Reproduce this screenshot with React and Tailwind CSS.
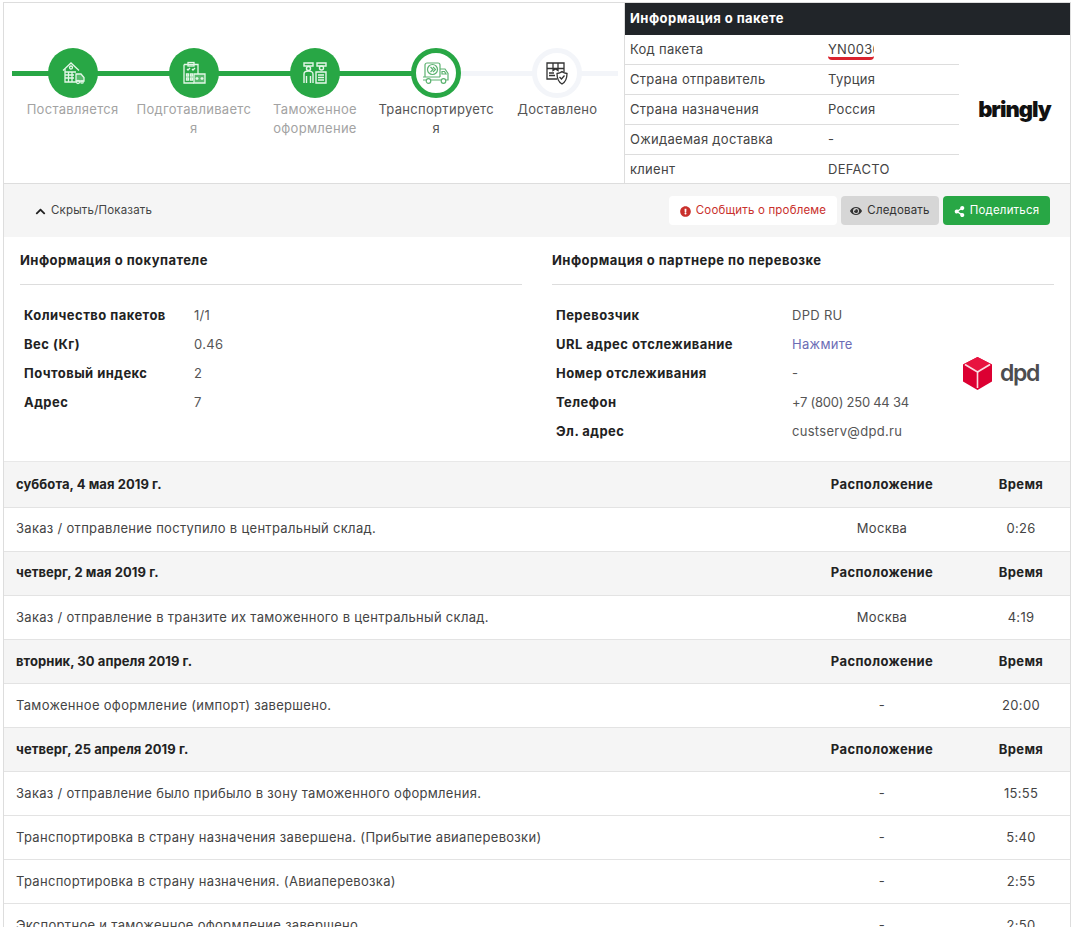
import React from 'react'
import { FaChevronUp, FaExclamationCircle, FaEye, FaShareAlt } from 'react-icons/fa'

// stepper icons, drawn by hand
const WarehouseIcon = () => (
  <svg width="24" height="24" viewBox="0 0 24 24" fill="none" stroke="currentColor" strokeWidth="1.3">
    <path d="M2 9.500 10 2l8 7.500" />
    <path d="M4 8v13h11" />
    <circle cx="10" cy="6.500" r="1.500" />
    <path d="M4 11h11M4 14h9M4 17h9M7.500 11v10M11 11v10" />
    <path d="M15 13h5l3 3.500V20h-8z" fill="currentColor" fillOpacity="0.25" />
    <circle cx="17" cy="21" r="1.500" />
    <circle cx="21" cy="21" r="1.200" />
  </svg>
)

const PlanIcon = () => (
  <svg width="24" height="24" viewBox="0 0 24 24" fill="none" stroke="currentColor" strokeWidth="1.3">
    <path d="M2 3.500h14V13M2 3.500V22h10" />
    <rect x="6" y="1.500" width="6" height="3.500" />
    <path d="m5 8 1 1 2-2M10 8l1 1 2-2" />
    <path d="M4.500 13h2v2h-2zM8.500 13h2v2h-2zM4.500 17h2v2h-2zM8.500 17h2v2h-2z" />
    <path d="M12 13h11v9H12z" fill="currentColor" fillOpacity="0.25" />
    <path d="M15 16v3M20 16v3M13.500 17.500h3M18.500 17.500h3" />
  </svg>
)

const CustomsIcon = () => (
  <svg width="24" height="24" viewBox="0 0 24 24" fill="none" stroke="currentColor" strokeWidth="1.4">
    <path d="M1 2h9v3H1zM14 2h9v3h-9z" />
    <circle cx="5.500" cy="7.500" r="2" />
    <circle cx="18.500" cy="7" r="2" />
    <path d="M1 22v-9c0-2 2-3 4.500-3s4.500 1 4.500 3v9M3.500 22v-7M7.500 22v-7" />
    <path d="M13 11h10v11H13zM15 14h6M15 16.500h6M15 19h6" />
  </svg>
)

const TruckIcon = () => (
  <svg width="28" height="24" viewBox="0 0 28 24" fill="none" stroke="currentColor" strokeWidth="1.2">
    <path d="M3 16V4c0-1 1-2 2-2h11c1 0 2 1 2 2v12" />
    <circle cx="10.500" cy="8.500" r="5" />
    <path d="m8.500 6 2.500 2.500L8.500 11M11 6l2.500 2.500L11 11" />
    <path d="M18 8h5l3 4.500V19h-2M1 16h17M1 19h3M9 19h10" />
    <path d="M20 10.500h2.500l1.500 2.500h-4z" />
    <circle cx="6.500" cy="20" r="2.300" />
    <circle cx="21.500" cy="20" r="2.300" />
  </svg>
)

const BoxShieldIcon = () => (
  <svg width="24" height="24" viewBox="0 0 24 24" fill="none" stroke="#333" strokeWidth="1.3">
    <path d="M12 18H2V2h17v9" />
    <path d="M2 7.500h17M8 2v7.500l2.500-1.500 2.500 1.500V2" />
    <path d="M4 12h5M4 14.500h6" />
    <path d="M17 10.500c1.500 1.300 3 1.800 5 2 0 5-1.500 8.500-5 10.500-3.500-2-5-5.500-5-10.500 2-.2 3.500-.7 5-2z" fill="#fff" />
    <path d="m14.500 16 2 2 3-3.500" />
  </svg>
)

const steps = [
  { label: ['Поставляется'], status: 'done', icon: <WarehouseIcon /> },
  { label: ['Подготавливаетс', 'я'], status: 'done', icon: <PlanIcon /> },
  { label: ['Таможенное', 'оформление'], status: 'done', icon: <CustomsIcon /> },
  { label: ['Транспортируетс', 'я'], status: 'active', icon: <TruckIcon /> },
  { label: ['Доставлено'], status: 'pending', icon: <BoxShieldIcon /> },
]

const packageRows = [
  ['Страна отправитель', 'Турция'],
  ['Страна назначения', 'Россия'],
  ['Ожидаемая доставка', '-'],
]

const buyerRows = [
  ['Количество пакетов', '1/1'],
  ['Вес (Кг)', '0.46'],
  ['Почтовый индекс', '2'],
  ['Адрес', '7'],
]

const history = [
  { type: 'head', date: 'суббота, 4 мая 2019 г.' },
  { text: 'Заказ / отправление поступило в центральный склад.', place: 'Москва', time: '0:26' },
  { type: 'head', date: 'четверг, 2 мая 2019 г.' },
  { text: 'Заказ / отправление в транзите их таможенного в центральный склад.', place: 'Москва', time: '4:19' },
  { type: 'head', date: 'вторник, 30 апреля 2019 г.' },
  { text: 'Таможенное оформление (импорт) завершено.', place: '-', time: '20:00' },
  { type: 'head', date: 'четверг, 25 апреля 2019 г.' },
  { text: 'Заказ / отправление было прибыло в зону таможенного оформления.', place: '-', time: '15:55' },
  { text: 'Транспортировка в страну назначения завершена. (Прибытие авиаперевозки)', place: '-', time: '5:40' },
  { text: 'Транспортировка в страну назначения. (Авиаперевозка)', place: '-', time: '2:55' },
  { text: 'Экспортное и таможенное оформление завершено.', place: '-', time: '2:50' },
]

function Step({ step }) {
  const { status, label, icon } = step
  return (
    <div className="relative flex flex-col items-center">
      <div className={`absolute left-0 top-[23px] h-[5px] w-1/2 ${status !== 'pending' ? 'bg-[#28a745]' : 'bg-[#f3f5f9]'}`}></div>
      <div className={`absolute right-0 top-[23px] h-[5px] w-1/2 ${status === 'done' ? 'bg-[#28a745]' : 'bg-[#f3f5f9]'}`}></div>
      {status === 'done' && (
        <div className="relative flex h-[50px] w-[50px] items-center justify-center rounded-full bg-[#28a745] text-[#e4f7e8]">{icon}</div>
      )}
      {status === 'active' && (
        <div className="relative flex h-[50px] w-[50px] items-center justify-center rounded-full border-[5px] border-[#28a745] bg-white text-[#5cb270]">{icon}</div>
      )}
      {status === 'pending' && (
        <div className="relative flex h-[50px] w-[50px] items-center justify-center rounded-full border-[5px] border-[#f3f5f9] bg-white">{icon}</div>
      )}
      <div className={`mt-[2px] text-center text-[13px] leading-[19px] ${status === 'done' ? 'text-[#a3a3a3]' : 'text-[#555]'}`}>
        {label.map(line => (
          <div key={line} className="whitespace-nowrap">{line}</div>
        ))}
      </div>
    </div>
  )
}

export default function App() {
  return (
    <div className="h-screen overflow-hidden bg-white pl-[3px] pt-[2px] font-['Inter','Noto_Sans',sans-serif] text-[13px] tracking-[0.023em] text-[#333]">
      <div className="w-[1068px] border border-b-0 border-[#ddd]">
        {/* top: stepper + package info */}
        <div className="flex h-[181px] border-b border-[#ddd]">
          <div className="w-[620px] pl-2 pt-[45px]">
            <div className="grid w-[606px] grid-cols-5">
              {steps.map((s, i) => <Step key={i} step={s} />)}
            </div>
          </div>
          <div className="flex-1 border-l border-[#ddd]">
            <div className="flex h-[32px] items-center bg-[#212529] pl-[5px] text-[13px] font-bold tracking-[0.035em] text-white">Информация о пакете</div>
            <div className="flex">
              <div className="w-[334px]">
                <div className="grid h-[30px] grid-cols-[198px_1fr] items-center border-b border-[#ddd] pl-[5px] text-[#444]">
                  <span>Код пакета</span>
                  <span className="w-[46px] overflow-hidden whitespace-nowrap rounded-sm border-b-[3px] border-[#d9232e] pt-[2px] leading-[16px]">YN0036</span>
                </div>
                {packageRows.map(([k, v]) => (
                  <div key={k} className="grid h-[30px] grid-cols-[198px_1fr] items-center border-b border-[#ddd] pl-[5px] text-[#444]">
                    <span>{k}</span>
                    <span>{v}</span>
                  </div>
                ))}
                <div className="grid h-[29px] grid-cols-[198px_1fr] items-center pl-[5px] text-[#444]">
                  <span>клиент</span>
                  <span>DEFACTO</span>
                </div>
              </div>
              <div className="flex flex-1 items-center justify-center pb-[1px]">
                <span className="text-[22px] font-black leading-none tracking-[-0.045em] text-[#111]">bringly</span>
              </div>
            </div>
          </div>
        </div>

        {/* toolbar */}
        <div className="flex h-[53px] items-center justify-between bg-[#f5f5f5] pl-[31px] pr-[20px] text-[11.5px] tracking-[0.015em]">
          <div className="flex items-center gap-[5px] pt-[1px] text-[#444]">
            <FaChevronUp className="text-[11px] text-[#222]" />
            <span>Скрыть/Показать</span>
          </div>
          <div className="flex gap-1">
            <button className="flex h-[29px] w-[168px] items-center justify-center gap-[5px] rounded-sm bg-white pt-[1px] text-[#c9302c]">
              <FaExclamationCircle className="text-[11px]" />
              Сообщить о проблеме
            </button>
            <button className="flex h-[29px] w-[98px] items-center justify-center gap-[5px] rounded-sm bg-[#d6d6d6] pt-[1px] text-[#333]">
              <FaEye className="text-[12px]" />
              Следовать
            </button>
            <button className="flex h-[29px] w-[107px] items-center justify-center gap-[5px] rounded-sm bg-[#28a745] pt-[1px] text-white">
              <FaShareAlt className="text-[11px]" />
              Поделиться
            </button>
          </div>
        </div>

        {/* buyer / carrier */}
        <div className="flex h-[224px] gap-[30px] px-4 pt-[13px]">
          <div className="w-[502px]">
            <h3 className="border-b border-[#ddd] pb-[14px] text-[13px] font-bold leading-[20px] tracking-[0.035em] text-[#222]">Информация о покупателе</h3>
            <div className="px-1 pt-[16px]">
              {buyerRows.map(([k, v]) => (
                <div key={k} className="grid h-[29px] grid-cols-[170px_1fr] items-center">
                  <span className="font-bold tracking-[0.035em] text-[#222]">{k}</span>
                  <span className="text-[#555]">{v}</span>
                </div>
              ))}
            </div>
          </div>
          <div className="w-[502px]">
            <h3 className="border-b border-[#ddd] pb-[14px] text-[13px] font-bold leading-[20px] tracking-[0.035em] text-[#222]">Информация о партнере по перевозке</h3>
            <div className="flex items-center pl-1 pt-[16px]">
              <div className="w-[407px]">
                {[
                  ['Перевозчик', 'DPD RU'],
                  ['URL адрес отслеживание', 'Нажмите'],
                  ['Номер отслеживания', '-'],
                  ['Телефон', '+7 (800) 250 44 34'],
                  ['Эл. адрес', 'custserv@dpd.ru'],
                ].map(([k, v]) => (
                  <div key={k} className="grid h-[29px] grid-cols-[236px_1fr] items-center">
                    <span className="font-bold tracking-[0.035em] text-[#222]">{k}</span>
                    {v === 'Нажмите' && <span className="text-[#6c6cb5]">{v}</span>}
                    {k === 'Телефон' && <span className="tracking-[-0.02em] text-[#555]">{v}</span>}
                    {v !== 'Нажмите' && k !== 'Телефон' && <span className="text-[#555]">{v}</span>}
                  </div>
                ))}
              </div>
              <div className="flex items-center gap-[8px]">
                <svg width="29" height="33" viewBox="0 0 29 33">
                  <path d="M14.500 0 29 7.500v17L14.500 33 0 24.500v-17z" fill="#dc0032" />
                  <path d="M14.500 0 29 7.500 14.500 15 0 7.500z" fill="#e8133f" />
                  <path d="m2 7.500 12.500 7.500v16" fill="none" stroke="#fff" strokeOpacity="0.85" strokeWidth="1.600" />
                  <path d="m27 7.500-12.500 7.500" fill="none" stroke="#fff" strokeOpacity="0.85" strokeWidth="1.600" />
                </svg>
                <span className="text-[23px] font-semibold leading-none tracking-[-0.06em] text-[#4d4d4f]">dpd</span>
              </div>
            </div>
          </div>
        </div>

        {/* tracking history */}
        <div className="border-t border-[#e8e8e8] bg-[#f5f5f5] pt-[1.5px]">
          {history.map((row, i) => row.type === 'head' ? (
            <div key={i} className="grid h-[44.1px] grid-cols-[1fr_180px_98px] items-center border-b border-[#e3e3e3] bg-[#f5f5f5] pl-3 font-bold tracking-[0.03em] text-[#222]">
              <span className="tracking-[0.005em]">{row.date}</span>
              <span className="text-center">Расположение</span>
              <span className="text-center">Время</span>
            </div>
          ) : (
            <div key={i} className="grid h-[44.1px] grid-cols-[1fr_180px_98px] items-center border-b border-[#e3e3e3] bg-white pl-3 text-[#444]">
              <span>{row.text}</span>
              <span className="text-center">{row.place}</span>
              <span className="text-center">{row.time}</span>
            </div>
          ))}
        </div>
      </div>
    </div>
  )
}
